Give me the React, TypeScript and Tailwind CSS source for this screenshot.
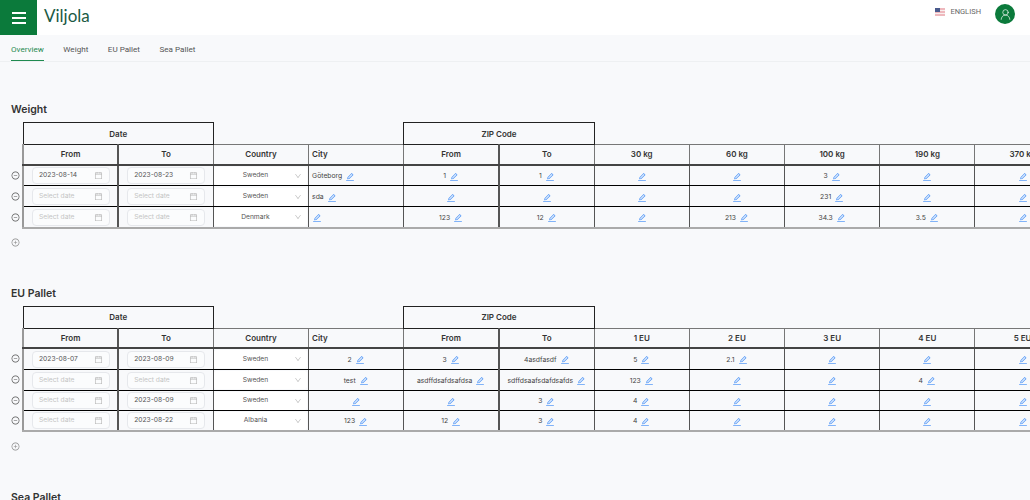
import { AiOutlineCalendar, AiOutlineDown, AiOutlineEdit, AiOutlineMinusCircle, AiOutlinePlusCircle } from "react-icons/ai";
import { UserRound } from "lucide-react";

type Row = {
  from: string;
  to: string;
  country: string;
  city: string;
  values: string[];
};

const weightCols = ["30 kg", "60 kg", "100 kg", "190 kg", "370 kg"];
const euCols = ["1 EU", "2 EU", "3 EU", "4 EU", "5 EU"];

const weightRows: Row[] = [
  { from: "2023-08-14", to: "2023-08-23", country: "Sweden", city: "Göteborg", values: ["1", "1", "", "", "3", "", ""] },
  { from: "", to: "", country: "Sweden", city: "sda", values: ["", "", "", "", "231", "", ""] },
  { from: "", to: "", country: "Denmark", city: "", values: ["123", "12", "", "213", "34.3", "3.5", ""] },
];

const euRows: Row[] = [
  { from: "2023-08-07", to: "2023-08-09", country: "Sweden", city: "2", values: ["3", "4asdfasdf", "5", "2.1", "", "", ""] },
  { from: "", to: "", country: "Sweden", city: "test", values: ["asdffdsafdsafdsa", "sdffdsaafsdafdsafds", "123", "", "", "4", ""] },
  { from: "", to: "2023-08-09", country: "Sweden", city: "", values: ["", "3", "4", "", "", "", ""] },
  { from: "", to: "2023-08-22", country: "Albania", city: "123", values: ["12", "3", "4", "", "", "", ""] },
];

function DateInput({ value }: { value: string }) {
  return (
    <div className="ml-[8px] flex h-[17px] w-[78px] items-center justify-between rounded-[4px] border border-[#e6e8ec] bg-[#fbfcfd] pl-[6px] pr-[6px]">
      <span className={value ? "text-[6.7px] text-[#555]" : "text-[6.7px] text-[#c4c4c4]"}>{value || "Select date"}</span>
      <AiOutlineCalendar className="text-[9px] text-[#b5b5b5]" />
    </div>
  );
}

function Editable({ value }: { value: string }) {
  return (
    <span className="inline-flex items-center gap-[3px] align-middle text-[6.8px] text-[#444]">
      {value && <span>{value}</span>}
      <AiOutlineEdit className="text-[10px] text-[#5a9cf8]" />
    </span>
  );
}

function PriceTable({ cols, rows, leftCity }: { cols: string[]; rows: Row[]; leftCity: boolean }) {
  const th = "h-[20px] border border-[#777] border-b-2 border-b-[#444] text-center text-[8px] font-semibold text-[#333]";
  const td = "border-x border-x-[#555] border-y border-y-black p-0 text-center";
  return (
    <table className="w-[1059.2px] table-fixed border-collapse leading-none">
      <colgroup>
        <col className="w-[12px]" />
        {Array.from({ length: 11 }).map((_, i) => (
          <col key={i} className="w-[95.2px]" />
        ))}
      </colgroup>
      <thead>
        <tr>
          <th />
          <th colSpan={2} className="h-[22px] border border-[#222] text-center text-[8px] font-semibold text-[#333]">Date</th>
          <th colSpan={2} />
          <th colSpan={2} className="h-[22px] border border-[#222] text-center text-[8px] font-semibold text-[#333]">ZIP Code</th>
          <th colSpan={5} />
        </tr>
        <tr>
          <th />
          <th className={`${th} border-l-2 border-l-[#999] border-r-2 border-r-[#555]`}>From</th>
          <th className={th}>To</th>
          <th className={th}>Country</th>
          <th className={`${th} pl-[3px] !text-left`}>City</th>
          <th className={`${th} border-r-2 border-r-[#555]`}>From</th>
          <th className={th}>To</th>
          {cols.map((c) => (
            <th key={c} className={th}>{c}</th>
          ))}
        </tr>
      </thead>
      <tbody>
        {rows.map((r, i) => {
          const last = i === rows.length - 1;
          const cell = last ? `${td} border-b-2 border-b-[#aaa]` : td;
          return (
            <tr key={i} className={rows.length === 4 && i >= 2 ? "h-[20px]" : "h-[21px]"}>
              <td className="p-0 text-left">
                <AiOutlineMinusCircle className="text-[9px] text-[#555]" />
              </td>
              <td className={`${cell} border-l-2 border-l-[#999] border-r-2 pt-[1px]`}><DateInput value={r.from} /></td>
              <td className={`${cell} pt-[1px]`}><DateInput value={r.to} /></td>
              <td className={`${cell} pt-[1px]`}>
                <div className="mx-auto flex h-[18px] w-[93px] items-center justify-between rounded-[3px] bg-white pl-[23px] pr-[5px]">
                  <span className="w-[36px] text-center text-[6.7px] text-[#555]">{r.country}</span>
                  <AiOutlineDown className="text-[8px] text-[#c0c0c0]" />
                </div>
              </td>
              <td className={leftCity ? `${cell} pl-[3px] !text-left` : cell}><Editable value={r.city} /></td>
              {r.values.map((v, j) => (
                <td key={j} className={j === 0 ? `${cell} border-r-2` : cell}><Editable value={v} /></td>
              ))}
            </tr>
          );
        })}
      </tbody>
    </table>
  );
}

export default function App() {
  return (
    <div className="h-[500px] w-[1030px] overflow-hidden bg-[#f8f9fb] font-['Inter',sans-serif]">
      <header className="flex h-[35px] justify-between bg-white pr-[15px]">
        <div className="flex items-center">
          <div className="flex h-[35px] w-[37px] flex-col items-center justify-center gap-[3px] bg-[#0b7a3b]">
            <span className="h-[2px] w-[14px] bg-white" />
            <span className="h-[2px] w-[14px] bg-white" />
            <span className="h-[2px] w-[14px] bg-white" />
          </div>
          <span className="ml-[7px] mt-[-4px] font-['Lato',sans-serif] text-[17px] leading-none text-[#1c5a44]">Viljola</span>
        </div>
        <div className="flex items-start pt-[4px]">
          <svg width="10" height="8" viewBox="0 0 10 8" className="mr-[5px] mt-[4px]">
            <rect width="10" height="8" fill="#eeb8bd" />
            <rect y="2" width="10" height="1" fill="#f8eeee" />
            <rect y="5" width="10" height="1" fill="#f8eeee" />
            <rect width="5" height="4" fill="#4a5a8c" />
          </svg>
          <span className="mr-[14px] mt-[3px] font-['Roboto',sans-serif] text-[7.5px] leading-[9px] text-[#666]">ENGLISH</span>
          <div className="flex h-[20px] w-[20px] items-center justify-center rounded-full bg-[#0b7a3b]">
            <UserRound size={13} strokeWidth={1.25} className="text-white" />
          </div>
        </div>
      </header>

      <nav className="flex h-[27px] gap-[19.5px] border-b border-[#eef0f2] px-[11px] font-['Roboto',sans-serif] text-[8.1px] text-[#555]">
        <a className="flex items-center border-b-[1.5px] border-[#1f8a50] pt-[3px] text-[#1f8a50]">Overview</a>
        <a className="flex items-center pt-[3px]">Weight</a>
        <a className="flex items-center pt-[3px]">EU Pallet</a>
        <a className="flex items-center pt-[3px]">Sea Pallet</a>
      </nav>

      <main className="pl-[11px] pt-[40px]">
        <h2 className="mb-[5px] h-[15px] text-[10.5px] font-semibold leading-[15px] text-[#333]">Weight</h2>
        <PriceTable cols={weightCols} rows={weightRows} leftCity />
        <AiOutlinePlusCircle className="mt-[9px] text-[9px] text-[#888]" />

        <h2 className="mb-[5px] mt-[39px] h-[15px] text-[10.5px] font-semibold leading-[15px] text-[#333]">EU Pallet</h2>
        <PriceTable cols={euCols} rows={euRows} leftCity={false} />
        <AiOutlinePlusCircle className="mt-[10px] text-[9px] text-[#888]" />

        <h2 className="mt-[39px] h-[15px] text-[10.5px] font-semibold leading-[15px] text-[#333]">Sea Pallet</h2>
      </main>
    </div>
  );
}
